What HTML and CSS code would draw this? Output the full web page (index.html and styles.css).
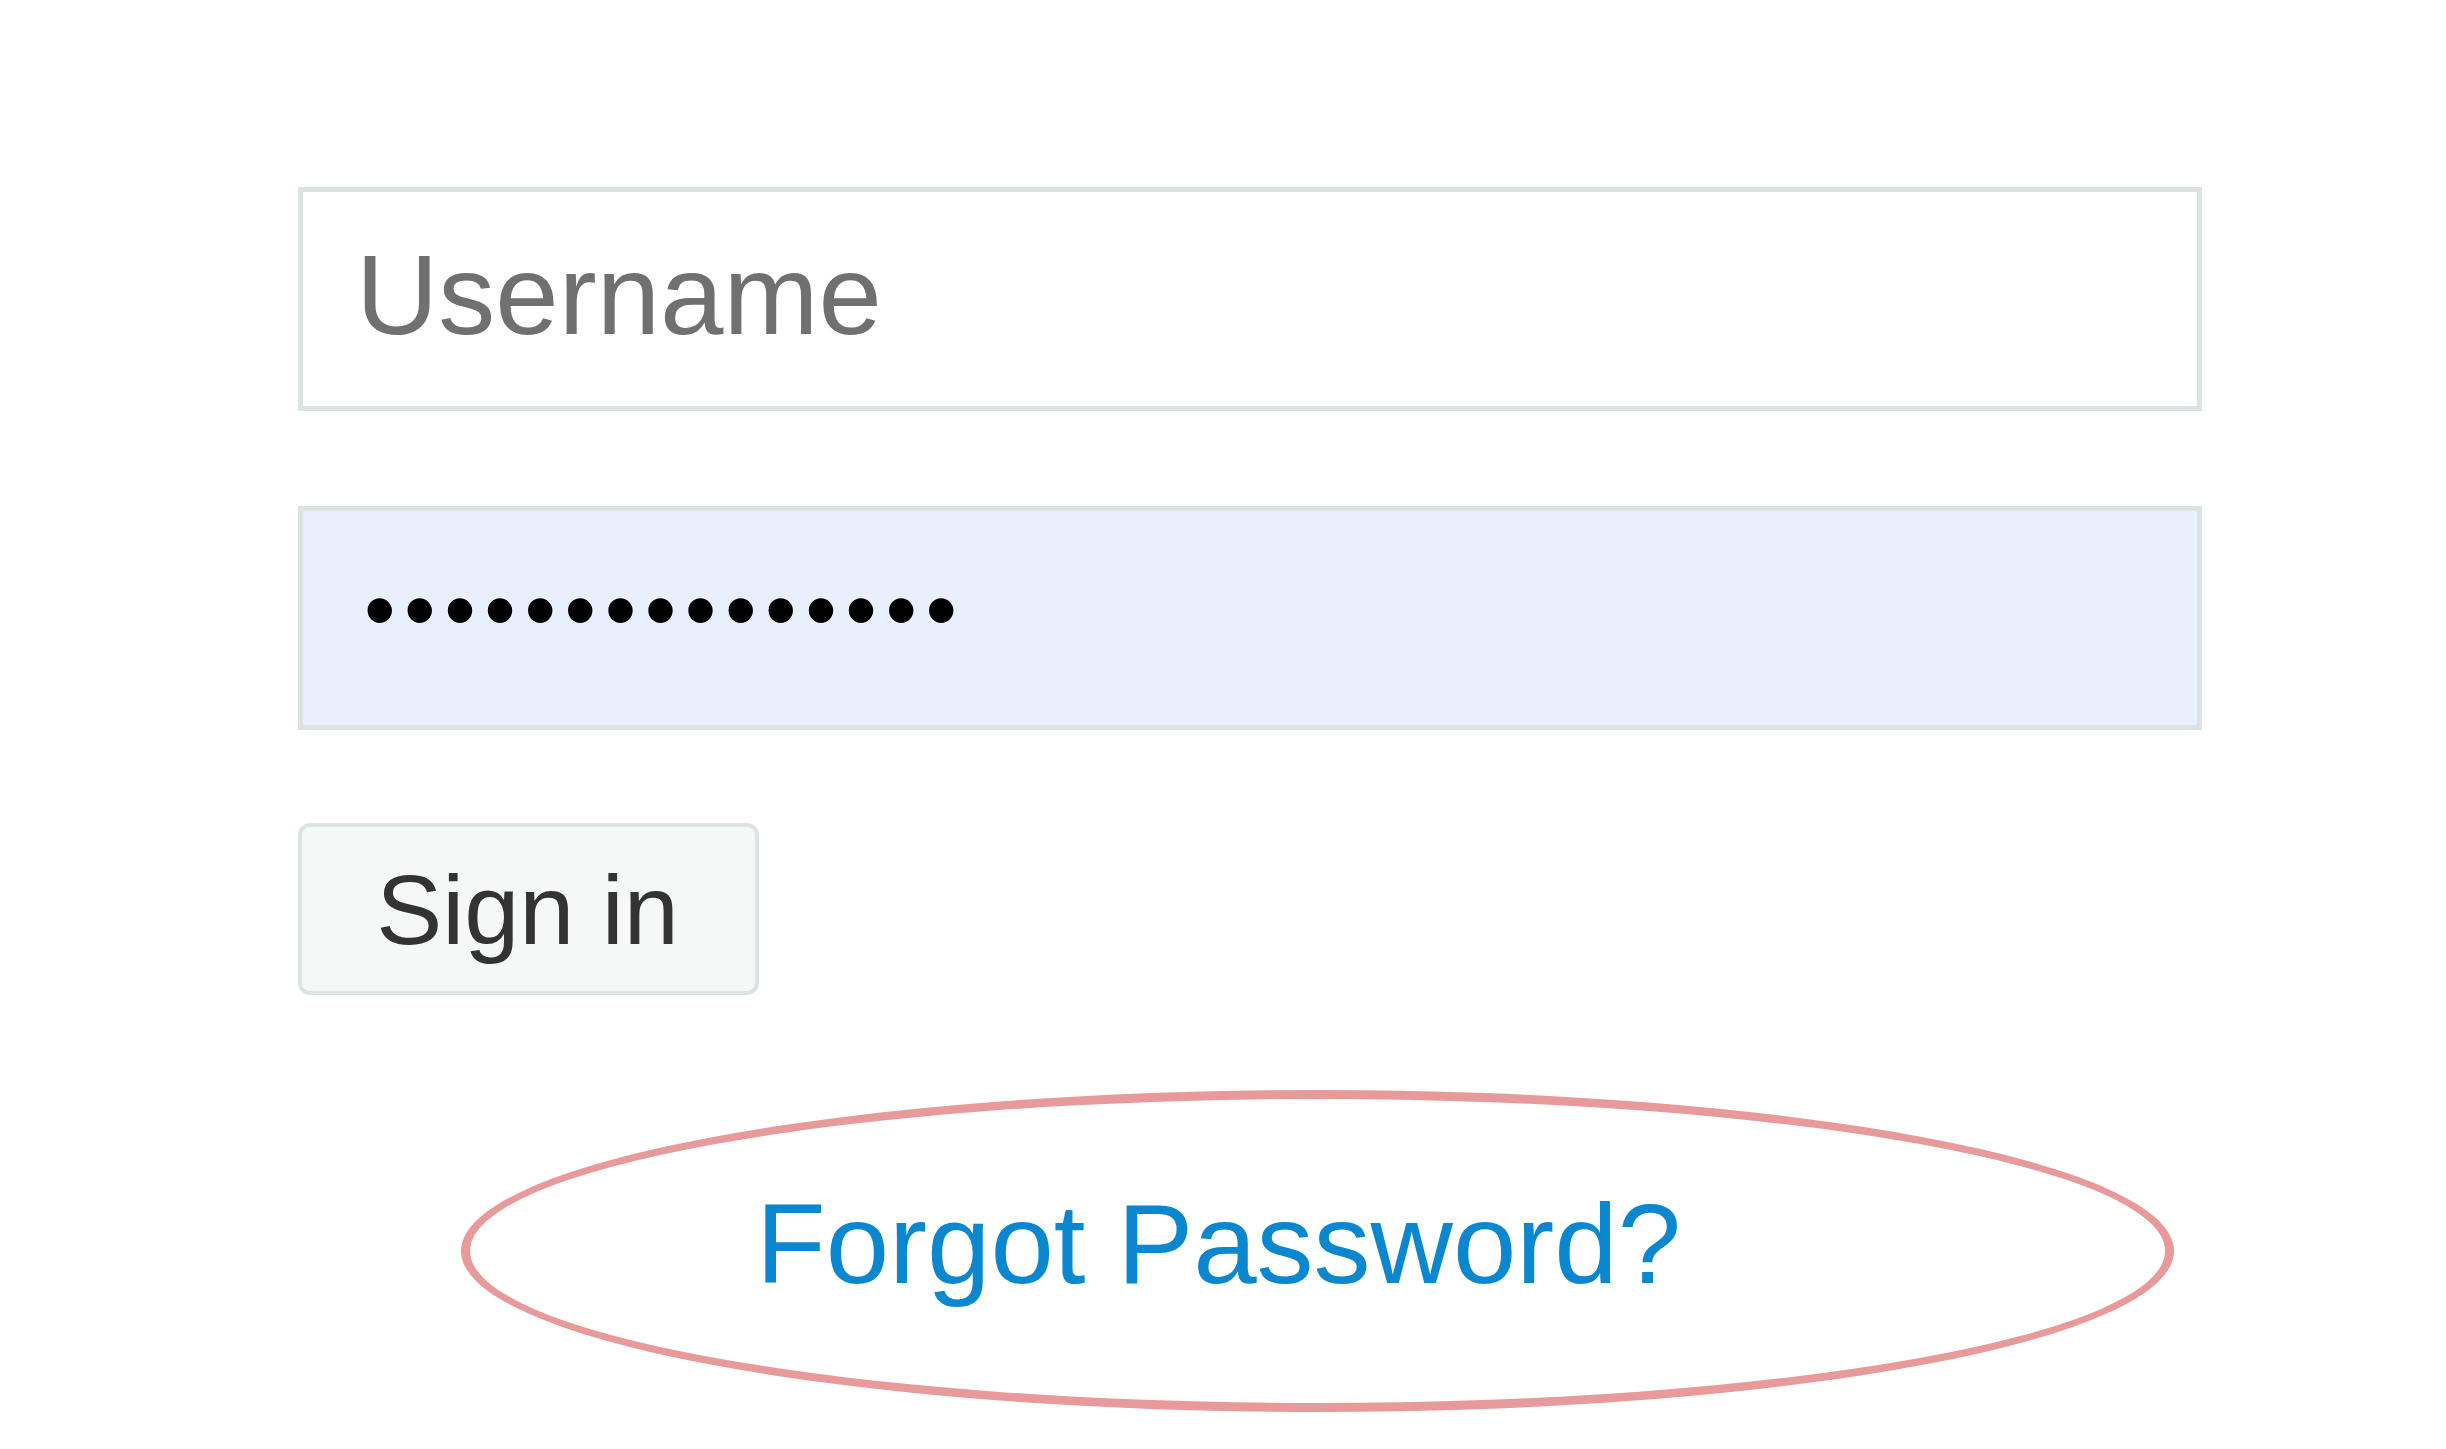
FILE: index.html
```html
<!DOCTYPE html>
<html lang="en">
<head>
<meta charset="utf-8">
<title>Sign in</title>
<link rel="stylesheet" href="styles.css">
</head>
<body>
<form class="login">
  <input class="field" type="text" placeholder="Username">
  <input class="field field--filled" type="password" value="passwordpasswor">
  <button class="btn" type="button">Sign in</button>
  <div class="forgot">
    <a class="forgot__link" href="#">Forgot Password?</a>
  </div>
</form>
</body>
</html>
```
FILE: styles.css
```css
html, body {
  margin: 0;
  padding: 0;
  background: #ffffff;
}

body {
  font-family: "Liberation Sans", Arial, sans-serif;
}

.login {
  display: flex;
  flex-direction: column;
  align-items: flex-start;
  padding: 187px 244px 0 298px;
}

.field {
  box-sizing: border-box;
  width: 100%;
  height: 224px;
  margin: 0;
  padding: 0 50px 10px 53px;
  border: 5px solid #dce3e3;
  border-radius: 0;
  background: #ffffff;
  font-family: "Liberation Sans", Arial, sans-serif;
  font-size: 114px;
  color: #000000;
  outline: none;
}

.field::placeholder {
  color: #707070;
  opacity: 1;
}

.field--filled {
  margin-top: 95px;
  padding-left: 61px;
  padding-bottom: 16px;
  background: #e8f0fe;
  font-size: 90px;
  letter-spacing: 8.6px;
}

.btn {
  box-sizing: border-box;
  margin-top: 93px;
  width: 461px;
  height: 172px;
  padding: 0 2px 0 0;
  border: 4px solid #dde3e3;
  border-radius: 12px;
  background: #f6f8f8;
  font-family: "Liberation Sans", Arial, sans-serif;
  font-size: 99px;
  color: #333333;
  line-height: 1;
}

.forgot {
  box-sizing: border-box;
  margin-top: 95px;
  margin-left: 163px;
  width: 1713px;
  height: 322px;
  padding: 88px 0 0 286px;
  border: 9px solid #e89a9a;
  border-radius: 50%;
}

.forgot__link {
  display: block;
  font-size: 114px;
  line-height: 1;
  color: #0a87cf;
  text-decoration: none;
  white-space: nowrap;
}
```
